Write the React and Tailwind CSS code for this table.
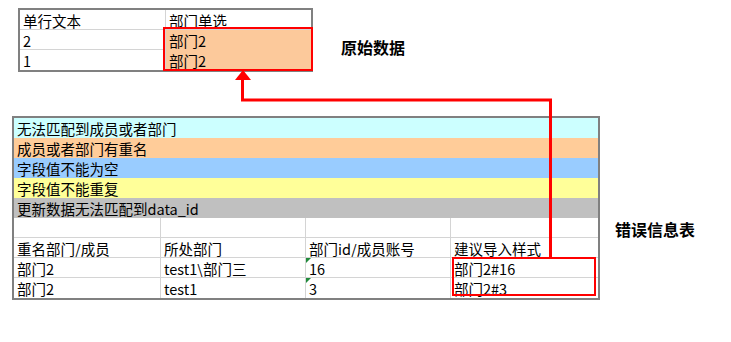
import React from 'react';

const font = { fontFamily: '"Noto Sans CJK SC", "Noto Sans", sans-serif' };

const bands = [
  { text: '无法匹配到成员或者部门', bg: 'bg-[#ccffff]' },
  { text: '成员或者部门有重名', bg: 'bg-[#ffcc99]' },
  { text: '字段值不能为空', bg: 'bg-[#99ccff]' },
  { text: '字段值不能重复', bg: 'bg-[#ffff99]' },
  { text: '更新数据无法匹配到data_id', bg: 'bg-[#c0c0c0]' },
];

const rows = [
  ['重名部门/成员', '所处部门', '部门id/成员账号', '建议导入样式'],
  ['部门2', 'test1\\部门三', '16', '部门2#16'],
  ['部门2', 'test1', '3', '部门2#3'],
];

const colW = ['w-[147px]', 'w-[145px]', 'w-[145px]', 'w-[147px]'];

const Cell = ({ className = '', children, mark }) => (
  <div
    className={`relative h-[20px] border-r border-b border-[#d4d4d4] pl-[3px] text-[14.5px] leading-[21px] text-black whitespace-nowrap overflow-hidden ${className}`}
  >
    {mark && (
      <span className="absolute left-0 top-0 w-0 h-0 border-t-[5px] border-r-[5px] border-t-[#1f8a3a] border-r-transparent" />
    )}
    {children}
  </div>
);

const SourceTable = () => (
  <div className="w-[295px] border-2 border-[#808080] bg-white">
    <div className="flex">
      <Cell className="w-[146px]">单行文本</Cell>
      <Cell className="w-[145px] border-r-0">部门单选</Cell>
    </div>
    <div className="flex">
      <Cell className="w-[146px]">2</Cell>
      <Cell className="w-[145px] border-r-0 bg-[#fcc99b] border-b-[#fcc99b]">部门2</Cell>
    </div>
    <div className="flex">
      <Cell className="w-[146px] border-b-0">1</Cell>
      <Cell className="w-[145px] border-r-0 border-b-0 bg-[#fcc99b]">部门2</Cell>
    </div>
  </div>
);

const ErrorTable = () => (
  <div className="w-[588px] border-2 border-[#808080] bg-white">
    {bands.map((b) => (
      <div key={b.text} className={`h-[20px] pl-[3px] text-[14.5px] leading-[21px] text-black ${b.bg}`}>
        {b.text}
      </div>
    ))}
    <div className="flex">
      {colW.map((w, i) => (
        <Cell key={i} className={`${w} ${i === 3 ? 'border-r-0' : ''}`} />
      ))}
    </div>
    {rows.map((r, ri) => (
      <div key={ri} className="flex">
        {r.map((c, ci) => (
          <Cell
            key={ci}
            mark={ri > 0 && ci === 2}
            className={`${colW[ci]} ${ci === 3 ? 'border-r-0' : ''} ${ri === 2 ? 'border-b-0' : ''}`}
          >
            {c}
          </Cell>
        ))}
      </div>
    ))}
  </div>
);

export default function App() {
  return (
    <div className="relative w-[731px] h-[342px] bg-white overflow-hidden" style={font}>
      <div className="flex items-start pt-[8px] pl-[18px]">
        <SourceTable />
        <div className="ml-[28px] mt-[27px] text-[16px] leading-[24px] font-bold text-black">原始数据</div>
      </div>

      <div className="flex items-start mt-[44px] pl-[12px]">
        <ErrorTable />
        <div className="ml-[15px] mt-[101px] text-[16px] leading-[24px] font-bold text-black">错误信息表</div>
      </div>

      {/* annotation boxes */}
      <div className="absolute left-[163px] top-[27px] w-[150px] h-[44px] border-2 border-[#ff0000]" />
      <div className="absolute left-[452px] top-[257px] w-[144px] h-[39px] border-2 border-[#ff0000]" />

      {/* connector arrow */}
      <svg className="absolute inset-0 pointer-events-none" width="731" height="342">
        <polyline
          points="242.5,79 242.5,100 550.5,100 550.5,257"
          fill="none"
          stroke="#ff0000"
          strokeWidth="3"
        />
        <polygon points="243,70 235,80 251,80" fill="#ff0000" />
      </svg>
    </div>
  );
}
